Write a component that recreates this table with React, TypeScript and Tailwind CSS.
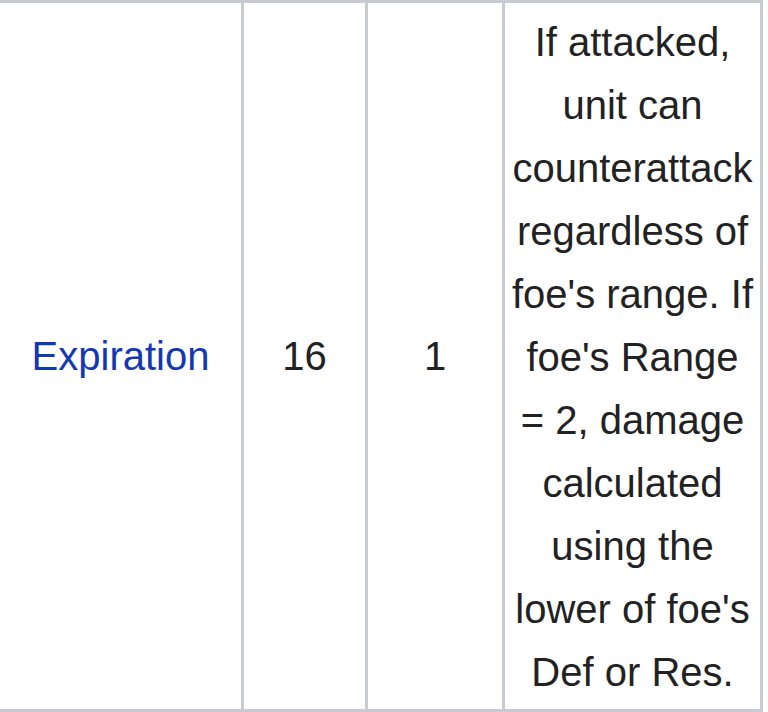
const descriptionLines = [
  'If attacked,',
  'unit can',
  'counterattack',
  'regardless of',
  "foe's range. If",
  "foe's Range",
  '= 2, damage',
  'calculated',
  'using the',
  "lower of foe's",
  'Def or Res.',
];

export default function App() {
  return (
    <div className="w-[768px] h-[712px] bg-white font-['Liberation_Sans',Arial,sans-serif] text-[40px] leading-[63px] text-[#222222]">
      {/* Skill row */}
      <div className="flex w-[763px] h-[712px] border-y-[3px] border-[#c8ccd1]">
        <div className="w-[244px] flex items-center justify-center border-r-[3px] border-[#c8ccd1]">
          <a className="text-[#1438b2]">Expiration</a>
        </div>
        <div className="w-[124px] flex items-center justify-center border-r-[3px] border-[#c8ccd1]">
          16
        </div>
        <div className="w-[137px] flex items-center justify-center border-r-[3px] border-[#c8ccd1]">
          1
        </div>
        <div className="w-[258px] flex flex-col items-center pt-[8px] pb-[5px] border-r-[3px] border-[#c8ccd1] text-center whitespace-nowrap">
          {descriptionLines.map((line) => (
            <span key={line}>{line}</span>
          ))}
        </div>
      </div>
    </div>
  );
}
